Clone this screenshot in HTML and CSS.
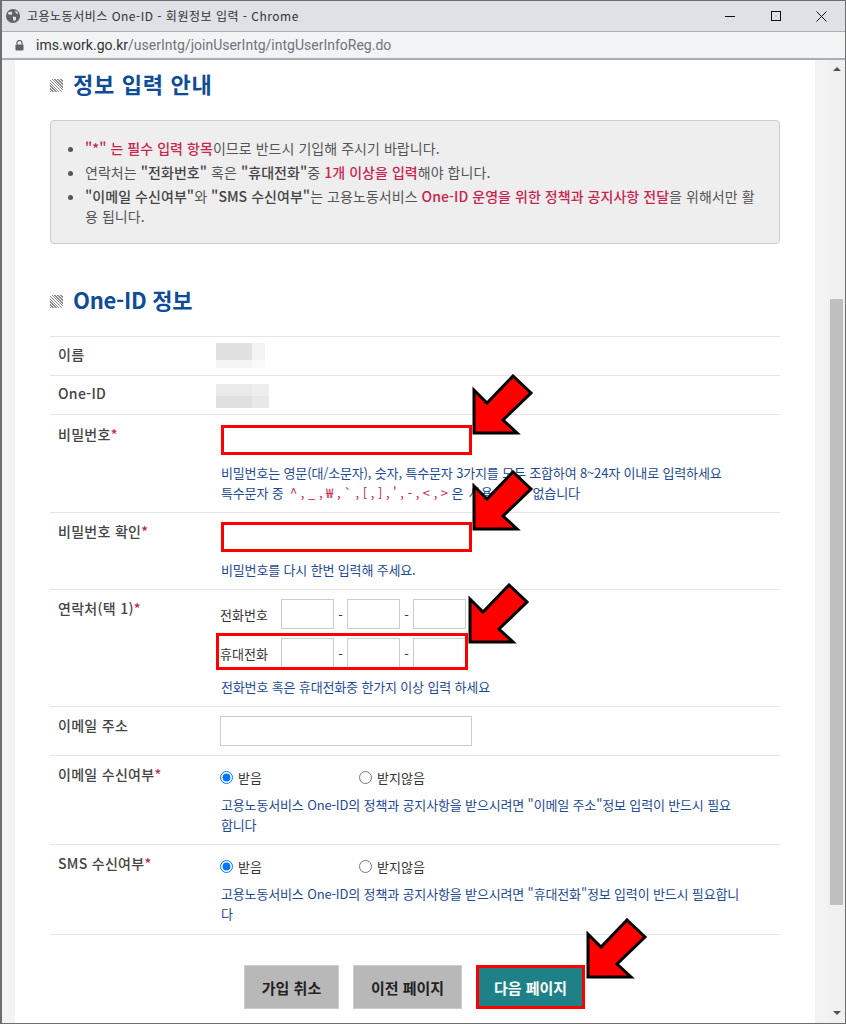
FILE: index.html
```html
<!DOCTYPE html>
<html lang="ko">
<head>
    <meta charset="UTF-8">
    <meta name="viewport" content="width=device-width, initial-scale=1.0">
    <title>고용노동서비스 One-ID - 회원정보 입력</title>
    <link rel="stylesheet" href="styles.css">
</head>
<body>
    <div class="window">
        <div class="titlebar">
            <svg class="globe" width="14" height="14" viewBox="0 0 14 14">
                <circle cx="7" cy="7" r="7" fill="#5f6368"/>
                <path d="M2 3.5 5 2.5 6.5 4 5.5 6 3.5 5.5 2 5ZM7 7.5 10 8 10 10.5 8 12.5 7 10ZM9 1.5 11.5 3 12 5 10 4.5Z" fill="#dee1e6"/>
            </svg>
            <span class="window-title">고용노동서비스 One-ID - 회원정보 입력 - Chrome</span>
            <div class="window-controls">
                <span class="ctl-min"></span>
                <span class="ctl-max"></span>
                <svg class="ctl-close" width="11" height="11" viewBox="0 0 11 11">
                    <path d="M0.5 0.5 10.5 10.5M10.5 0.5 0.5 10.5" stroke="#111" stroke-width="1" fill="none"/>
                </svg>
            </div>
        </div>
        <div class="urlbar">
            <svg class="lock" width="9" height="11" viewBox="0 0 9 11">
                <path d="M2 4.5V3a2.5 2.5 0 0 1 5 0v1.5" stroke="#5f6368" stroke-width="1.2" fill="none"/>
                <rect x="0.5" y="4.5" width="8" height="6" rx="0.8" fill="#5f6368"/>
            </svg>
            <span class="url"><b>ims.work.go.kr</b>/userIntg/joinUserIntg/intgUserInfoReg.do</span>
        </div>

        <div class="viewport">
            <div class="gutter gutter-left"></div>
            <div class="page">
                <h2 class="section-title">정보 입력 안내</h2>
                <div class="notice">
                    <ul>
                        <li><span class="pink">"*" 는 필수 입력 항목</span>이므로 반드시 기입해 주시기 바랍니다.</li>
                        <li>연락처는 <strong>"전화번호"</strong> 혹은 <strong>"휴대전화"</strong>중 <span class="pink">1개 이상을 입력</span>해야 합니다.</li>
                        <li><strong>"이메일 수신여부"</strong>와 <strong>"SMS 수신여부"</strong>는 고용노동서비스 <span class="pink">One-ID 운영을 위한 정책과 공지사항 전달</span>을 위해서만 활용 됩니다.</li>
                    </ul>
                </div>

                <h2 class="section-title second">One-ID 정보</h2>
                <div class="form-table">
                    <div class="row row-name">
                        <div class="label">이름</div>
                        <div class="blur blur-name"><i></i><i></i><i></i><i></i></div>
                    </div>
                    <div class="row row-name">
                        <div class="label">One-ID</div>
                        <div class="blur blur-id"><i></i><i></i><i></i><i></i></div>
                    </div>
                    <div class="row row-pw">
                        <div class="label label-first">비밀번호<em>*</em></div>
                        <div class="field first-field">
                            <input type="password" class="text-input marked">
                            <p class="hint">비밀번호는 영문(대/소문자), 숫자, 특수문자 3가지를 모두 조합하여 8~24자 이내로 입력하세요<br>특수문자 중 <span class="pink symbols">^ , _ , ₩ , ` , [ , ] , ' , - , &lt; , &gt;</span> <span class="wide-words">은 사용 할 수 없습니다</span></p>
                        </div>
                    </div>
                    <div class="row row-pw">
                        <div class="label">비밀번호 확인<em>*</em></div>
                        <div class="field">
                            <input type="password" class="text-input marked">
                            <p class="hint">비밀번호를 다시 한번 입력해 주세요.</p>
                        </div>
                    </div>
                    <div class="row row-pw">
                        <div class="label">연락처(택 1)<em>*</em></div>
                        <div class="field">
                            <div class="phone">
                                <span class="phone-label">전화번호</span>
                                <input type="text" class="phone-input"><span class="dash">-</span>
                                <input type="text" class="phone-input"><span class="dash">-</span>
                                <input type="text" class="phone-input">
                            </div>
                            <div class="phone">
                                <span class="phone-label">휴대전화</span>
                                <input type="text" class="phone-input"><span class="dash">-</span>
                                <input type="text" class="phone-input"><span class="dash">-</span>
                                <input type="text" class="phone-input">
                            </div>
                            <p class="hint">전화번호 혹은 휴대전화중 한가지 이상 입력 하세요</p>
                        </div>
                    </div>
                    <div class="row row-pw">
                        <div class="label">이메일 주소</div>
                        <div class="field">
                            <input type="text" class="text-input">
                        </div>
                    </div>
                    <div class="row row-opt">
                        <div class="label">이메일 수신여부<em>*</em></div>
                        <div class="field">
                            <div class="radios">
                                <label class="radio"><input type="radio" name="mail" checked>받음</label>
                                <label class="radio"><input type="radio" name="mail">받지않음</label>
                            </div>
                            <p class="hint">고용노동서비스 One-ID의 정책과 공지사항을 받으시려면 "이메일 주소"정보 입력이 반드시 필요<br>합니다</p>
                        </div>
                    </div>
                    <div class="row row-opt row-last">
                        <div class="label">SMS 수신여부<em>*</em></div>
                        <div class="field">
                            <div class="radios">
                                <label class="radio"><input type="radio" name="sms" checked>받음</label>
                                <label class="radio"><input type="radio" name="sms">받지않음</label>
                            </div>
                            <p class="hint">고용노동서비스 One-ID의 정책과 공지사항을 받으시려면 "휴대전화"정보 입력이 반드시 필요합니<br>다</p>
                        </div>
                    </div>
                </div>
                <div class="buttons">
                    <button class="btn btn-small">가입 취소</button>
                    <button class="btn">이전 페이지</button>
                    <button class="btn btn-next">다음 페이지</button>
                </div>
            </div>
            <div class="gutter gutter-right"></div>
            <div class="scrollbar">
                <span class="arrow-up"></span>
                <span class="thumb"></span>
                <span class="arrow-down"></span>
            </div>
        </div>

        <div class="mark-box"></div>
        <svg class="pointer pointer-1" width="62" height="62" viewBox="0 0 62 62"><polygon points="2,16 2,59 45,59 31,46 59,19 41,2 15,29"/></svg>
        <svg class="pointer pointer-2" width="62" height="62" viewBox="0 0 62 62"><polygon points="2,16 2,59 45,59 31,46 59,19 41,2 15,29"/></svg>
        <svg class="pointer pointer-3" width="62" height="62" viewBox="0 0 62 62"><polygon points="2,16 2,59 45,59 31,46 59,19 41,2 15,29"/></svg>
        <svg class="pointer pointer-4" width="62" height="62" viewBox="0 0 62 62"><polygon points="2,16 2,59 45,59 31,46 59,19 41,2 15,29"/></svg>
    </div>
</body>
</html>
```

FILE: styles.css
```css
* {
    box-sizing: border-box;
}
body {
    margin: 0;
    font-family: "Noto Sans CJK KR", "Noto Sans", sans-serif;
    font-size: 13px;
    color: #555;
    background: #fff;
}
.window {
    position: relative;
    width: 846px;
    height: 1024px;
    overflow: hidden;
    display: flex;
    flex-direction: column;
    border: 1px solid #6e6e6e;
    border-width: 1px 1px 1px 2px;
}

/* browser chrome */
.titlebar {
    height: 31px;
    flex: none;
    display: flex;
    align-items: center;
    padding-left: 4px;
    background: #dee1e6;
    border-bottom: 1px solid #aaadb1;
}
.globe {
    margin-right: 7px;
}
.window-title {
    font-size: 12px;
    letter-spacing: 0.5px;
    color: #333;
    margin-top: -2px;
}
.window-controls {
    margin-left: auto;
    display: flex;
    align-items: center;
    padding-right: 18px;
}
.ctl-min {
    width: 10px;
    height: 1px;
    background: #111;
}
.ctl-max {
    width: 10px;
    height: 10px;
    border: 1px solid #111;
    margin-left: 36px;
}
.ctl-close {
    margin-left: 35px;
}
.urlbar {
    height: 28px;
    flex: none;
    display: flex;
    align-items: center;
    padding-left: 13px;
    background: #f1f3f4;
    border-bottom: 2px solid #aaadb1;
}
.lock {
    margin-right: 12px;
}
.url {
    font-family: "Roboto", "Liberation Sans", sans-serif;
    font-size: 14px;
    color: #70757a;
}
.url b {
    font-weight: 400;
    color: #333;
}

/* page area */
.viewport {
    flex: 1;
    display: flex;
    min-height: 0;
}
.gutter {
    flex: none;
    background: #f3f3f3;
}
.gutter-left {
    width: 13px;
}
.gutter-right {
    width: 13px;
}
.page {
    width: 800px;
    flex: none;
    padding: 9px 35px 0;
    background: #fff;
}
.scrollbar {
    width: 17px;
    flex: none;
    display: flex;
    flex-direction: column;
    align-items: center;
    padding: 7px 0 8px;
    background: #f0f0f0;
}
.arrow-up, .arrow-down {
    width: 0;
    height: 0;
    border-left: 4px solid transparent;
    border-right: 4px solid transparent;
}
.arrow-up {
    border-bottom: 4px solid #505050;
}
.arrow-down {
    border-top: 4px solid #505050;
    margin-top: auto;
}
.thumb {
    width: 13px;
    height: 606px;
    margin-top: 228px;
    background: #bfbfbf;
}

.section-title {
    display: flex;
    align-items: center;
    height: 32px;
    margin: 0 0 19px;
    padding-bottom: 4px;
    font-size: 22px;
    font-weight: 700;
    letter-spacing: 0.7px;
    color: #0f4c97;
}
.section-title::before {
    content: "";
    width: 13px;
    height: 13px;
    margin: 4px 10px 0 0;
    background: repeating-linear-gradient(45deg, #8a8a8a 0, #8a8a8a 1px, #fff 1px, #fff 2px);
}
.section-title.second {
    margin-top: 41px;
    letter-spacing: -0.25px;
}

.notice {
    height: 124px;
    padding: 17px 20px 0 0;
    background: #eee;
    border: 1px solid #ccc;
    border-radius: 4px;
    font-size: 14px;
    letter-spacing: 0.05px;
}
.notice ul {
    margin: 0;
    padding-left: 34px;
}
.notice li {
    line-height: 20px;
    margin-bottom: 4px;
}
.notice strong {
    font-weight: 500;
    color: #444;
}
.notice .pink {
    font-weight: 500;
}
.pink {
    color: #c7254e;
}

.form-table {
    border-bottom: 1px solid #e5e5e5;
}
.row {
    display: grid;
    grid-template-columns: 170px 1fr;
    border-top: 1px solid #e5e5e5;
}
.row-name {
    height: 39px;
}
.row-pw {
    padding-top: 9px;
    padding-bottom: 9px;
}
.row-opt {
    padding-top: 11px;
    padding-bottom: 9px;
}
.row-last {
    padding-bottom: 10px;
}
.first-field {
    padding-top: 1px;
}
.label {
    padding-left: 8px;
    line-height: 20px;
    font-size: 14px;
    font-weight: 500;
    letter-spacing: 0.3px;
    color: #444;
}
.row-name .label {
    padding-top: 7px;
}
.row-pw .label {
    margin-top: -1px;
}
.row-pw .label-first {
    margin-top: 0;
}
.row-opt .label {
    margin-top: -3px;
}
.label em {
    font-style: normal;
    color: #c7254e;
}
.blur {
    display: grid;
    margin-left: -4px;
}
.blur-name {
    grid-template-columns: 36px 13px;
    grid-template-rows: 17px 8px;
    width: 49px;
    margin-top: 6px;
}
.blur-id {
    grid-template-columns: 36px 17px;
    grid-template-rows: 12px 12px;
    width: 53px;
    margin-top: 8px;
}
.blur-name i:nth-child(1) { background: #e0e0e0; }
.blur-name i:nth-child(2) { background: #f3f3f3; }
.blur-name i:nth-child(3) { background: #f5f5f5; }
.blur-name i:nth-child(4) { background: #f9f9f9; }
.blur-id i:nth-child(1) { background: #eaeaea; }
.blur-id i:nth-child(2) { background: #eeeef0; }
.blur-id i:nth-child(3) { background: #e0e0e0; }
.blur-id i:nth-child(4) { background: #e8e8e8; }

.text-input {
    display: block;
    width: 252px;
    height: 30px;
    border: 1px solid #ccc;
    background: #fff;
    padding: 0 6px;
}
.text-input.marked {
    width: 251px;
    margin-left: 1px;
    border: 3px solid #f00;
}
.hint {
    margin: 8px 0 0;
    padding-left: 1px;
    line-height: 20px;
    letter-spacing: -0.15px;
    color: #1d4a94;
}
.symbols {
    margin-left: 3px;
    letter-spacing: -0.03px;
}
.wide-words {
    word-spacing: 2px;
}
.phone {
    display: flex;
    align-items: center;
    margin-bottom: 9px;
    font-size: 13px;
    color: #333;
}
.phone-label {
    width: 61px;
}
.phone-input {
    width: 53px;
    height: 30px;
    border: 1px solid #ccc;
    background: #fff;
}
.dash {
    width: 13px;
    text-align: center;
}
.phone + .hint {
    margin-top: 0;
}
.radios {
    display: flex;
    height: 20px;
    align-items: center;
}
.radio {
    display: flex;
    align-items: center;
    width: 139px;
    color: #333;
    font-size: 13px;
}
.radio input {
    width: 13px;
    height: 13px;
    margin: 0 5px 0 0;
}
.row-opt .hint {
    margin-top: 8px;
}

.buttons {
    display: flex;
    justify-content: center;
    gap: 14px;
    margin: 30px 1px 0 0;
}
.btn {
    width: 109px;
    height: 44px;
    font-family: inherit;
    font-size: 15px;
    font-weight: 700;
    color: #222;
    background: #b8b8b8;
    border: 1px solid #ccc;
}
.btn-small {
    width: 95px;
}
.btn-next {
    color: #fff;
    background: #1f8188;
    border: 3px solid #f00;
}

/* red annotations drawn on top of the screenshot */
.mark-box {
    position: absolute;
    left: 214px;
    top: 632px;
    width: 252px;
    height: 37px;
    border: 3px solid #f00;
}
.pointer {
    position: absolute;
}
.pointer polygon {
    fill: #f00;
    stroke: #000;
    stroke-width: 3;
}
.pointer-1 { left: 470px; top: 373px; }
.pointer-2 { left: 470px; top: 469px; }
.pointer-3 { left: 466px; top: 582px; }
.pointer-4 { left: 584px; top: 917px; }
```
